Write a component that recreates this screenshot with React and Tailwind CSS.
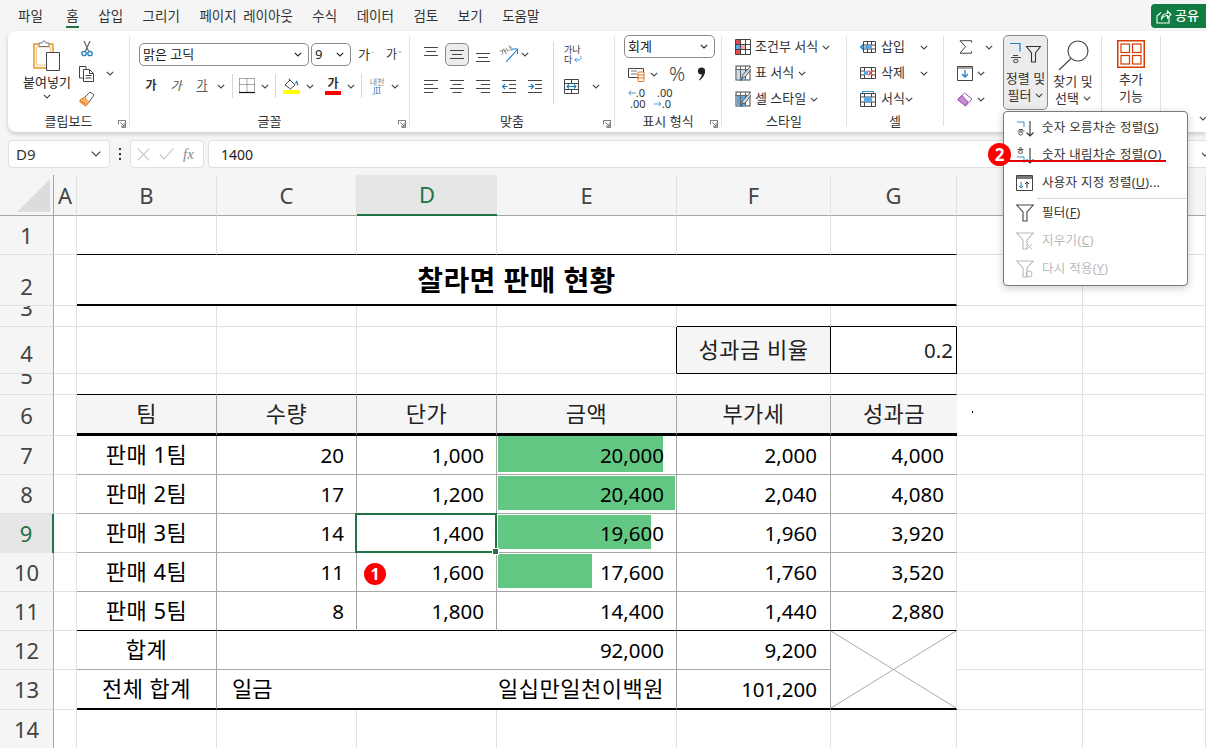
import React from "react";

const FONT = "font-['Noto_Sans','Noto_Sans_CJK_KR',sans-serif]";
const GRID = "border-r border-b border-[#e1e1e1]";
const TBL = "border-r border-b border-[#a6a6a6]";
const TBL_END = "border-r border-b border-r-[#a6a6a6] border-b-black";
const TBL_LAST = "border-r border-b-2 border-r-[#a6a6a6] border-b-black";

const Chev = ({ dark }) => (
  <svg width="8" height="5" viewBox="0 0 8 5" className="shrink-0">
    <path d="M.8.8 4 4 7.2.8" fill="none" stroke={dark ? "#222" : "#444"} strokeWidth="1.1" />
  </svg>
);

const ChevBox = ({ className }) => (
  <div className={`flex items-center justify-center ${className}`}>
    <Chev />
  </div>
);

const Launcher = () => (
  <svg width="8" height="8" viewBox="0 0 9 9">
    <path d="M.5 5V.5H8.500V8.500H4M2.500 2.500 7 7M7 3.500V7H3.500" fill="none" stroke="#555" strokeWidth=".9" />
  </svg>
);

const Group = ({ className, label, launcher, children }) => (
  <div className={`flex h-[90px] shrink-0 flex-col border-r border-[#e1e1e1] ${className}`}>
    <div className="h-[78px] shrink-0">{children}</div>
    <div className="grid h-[12px] grid-cols-[1fr_auto_1fr] grid-rows-[14px] items-center text-[13px] leading-[14px] text-[#333]">
      <span />
      <span className="whitespace-nowrap">{label}</span>
      <span className="flex justify-end pr-[3px] pt-[5px]">{launcher && <Launcher />}</span>
    </div>
  </div>
);

const Combo = ({ className, text }) => (
  <div className={`flex h-[23px] items-center justify-between rounded-[5px] border border-[#8a8a8a] pl-[3px] pr-[6px] text-[13px] text-[#222] ${className}`}>
    <span>{text}</span>
    <Chev dark />
  </div>
);

const Sep = ({ className }) => <div className={`w-px bg-[#d6d6d6] ${className}`} />;

const PasteIcon = () => (
  <svg width="30" height="32" viewBox="0 0 30 32">
    <path d="M2 5h19v24H2z" fill="#fdf3df" stroke="#e39a33" strokeWidth="1.500" />
    <path d="M4.500 8h14v18h-14z" fill="#fff" stroke="#f0c98a" />
    <path d="M7 6.500V4h3l2-2.500L14 4h3v3.500H7z" fill="#fff" stroke="#777" />
    <path d="M14.500 13.500h13v18h-13z" fill="#fff" stroke="#444" />
  </svg>
);
const ScissorsIcon = () => (
  <svg width="12" height="17" viewBox="0 0 12 17">
    <path d="M3 1l4.500 10M9 1 4.500 11" stroke="#666" strokeWidth="1.200" fill="none" />
    <circle cx="3" cy="13.500" r="2.200" fill="none" stroke="#1f7fc4" strokeWidth="1.300" />
    <circle cx="9" cy="13.500" r="2.200" fill="none" stroke="#1f7fc4" strokeWidth="1.300" />
  </svg>
);
const CopyIcon = () => (
  <svg width="16" height="16" viewBox="0 0 16 16" fill="none" stroke="#444">
    <path d="M5 12H.5V.5H7V3" />
    <path d="M4.500 3.500h6l4 4v8h-10z" fill="#fff" />
    <path d="M10.500 3.500v4h4M6.500 9.500h6M6.500 12h6" />
  </svg>
);
const BrushIcon = () => (
  <svg width="16" height="16" viewBox="0 0 16 16">
    <path d="M1 9l5-3 4 5-3 4-3-2-3-2z" fill="#f6b26b" stroke="#e2711d" />
    <path d="M6 6l5-5 4 3-5 7" fill="#fff" stroke="#555" />
    <path d="M3 10l3 3" stroke="#e2711d" />
  </svg>
);
const BorderIcon = () => (
  <svg width="16" height="16" viewBox="0 0 16 16" fill="none">
    <path d="M.5.500h15v13M.5.500v13M8 .5v13M.5 6.500h15" stroke="#555" strokeWidth="1" strokeDasharray="1 1" />
    <path d="M0 14.500h16" stroke="#111" strokeWidth="1.200" />
  </svg>
);
const FillIcon = () => (
  <svg width="17" height="16" viewBox="0 0 17 16">
    <path d="M2 7l5-5 5 5-4.500 4z" fill="#fff" stroke="#444" />
    <path d="M6 2l1-1.500M12.500 5.500l1-2 1 2v2" fill="none" stroke="#1f7fc4" strokeWidth="1.200" />
    <rect y="12" width="17" height="4" fill="#ffff00" />
  </svg>
);
const AlignLines = ({ kind }) => {
  const rows = {
    top: ["M0 .5h14", "M2 4.500h10", "M0 8.500h14"],
    mid: ["M0 .5h14", "M2 4.500h10", "M0 8.500h14"],
    left: ["M0 .5h14", "M0 4.500h9", "M0 8.500h14", "M0 12.500h9"],
    center: ["M0 .5h14", "M2.500 4.500h9", "M0 8.500h14", "M2.500 12.500h9"],
    right: ["M0 .5h14", "M5 4.500h9", "M0 8.500h14", "M5 12.500h9"],
  }[kind];
  return (
    <svg width="14" height="13" viewBox="0 0 14 13">
      {rows.map((d) => (
        <path key={d} d={d} stroke="#444" />
      ))}
    </svg>
  );
};
const IndentIcon = ({ dir }) => (
  <svg width="14" height="13" viewBox="0 0 14 13" fill="none">
    <path d="M0 .5h14M7 4.500h7M7 8.500h7M0 12.500h14" stroke="#444" />
    {dir === "out" ? (
      <path d="M5.500 6.500H.5M3 4 .5 6.500 3 9" stroke="#1f7fc4" strokeWidth="1.200" />
    ) : (
      <path d="M.5 6.500h5M3 4l2.500 2.500L3 9" stroke="#1f7fc4" strokeWidth="1.200" />
    )}
  </svg>
);
const MergeIcon = () => (
  <svg width="15" height="15" viewBox="0 0 15 15" fill="none">
    <path d="M.5.500h14v14H.5zM.5 4.500h14M.5 10.500h14M7.500.5v4M7.500 10.500v4" stroke="#444" />
    <path d="M3 7.500h9M5 5.500l-2 2 2 2M10 5.500l2 2-2 2" stroke="#1f7fc4" strokeWidth="1.100" />
  </svg>
);
const AccountIcon = () => (
  <svg width="17" height="15" viewBox="0 0 17 15" fill="none">
    <path d="M.5 1.500h15v9H.5z" fill="#fff" stroke="#444" />
    <path d="M3 4h6M3 7h6" stroke="#777" />
    <rect x="10" y="5" width="6" height="9.500" rx="1" fill="#fff" stroke="#e2711d" />
    <path d="M10 8h6M10 11h6" stroke="#e2711d" />
  </svg>
);
const Comma = () => (
  <svg width="9" height="14" viewBox="0 0 9 14">
    <circle cx="4.500" cy="4" r="3.600" fill="#222" />
    <path d="M8 4c0 4-2 7-5.500 9.500l-.5-.8C4 11 5 9 5 6z" fill="#222" />
  </svg>
);
const TableIcon = ({ children }) => (
  <svg width="16" height="16" viewBox="0 0 16 16" className="shrink-0" fill="none">
    {children}
    <path d="M.5.500h15v15H.5zM5.500.5v15M10.500.5v15M.5 5.500h15M.5 10.500h15" stroke="#444" />
  </svg>
);
const CondIcon = () => (
  <TableIcon>
    <rect x="1" y="1" width="5" height="5" fill="#e8474c" />
    <rect x="1" y="6" width="5" height="4" fill="#5aa7e6" />
    <rect x="1" y="11" width="5" height="4" fill="#e8474c" />
    <rect x="6" y="6" width="5" height="4" fill="#f4a9ac" />
  </TableIcon>
);
const StyleIcon = ({ fill }) => (
  <svg width="16" height="16" viewBox="0 0 16 16" className="shrink-0" fill="none">
    <rect x="1" y="1" width="14" height="14" fill="#fff" stroke="#444" />
    <rect x="2" y="4" width="9" height="10" fill={fill} />
    <path d="M.5 4.500h15M5.500 1v14M10.500 1v14" stroke="#666" />
    <path d="M15.500 1.500 8 9.500l-1.500 4 4-2 6-8" fill="#ddd" stroke="#555" />
    <path d="M6.500 13.500 5 15.500l3-1" fill="#1f7fc4" stroke="#1f7fc4" />
  </svg>
);
const InsertIcon = () => (
  <svg width="16" height="16" viewBox="0 0 16 16" fill="none">
    <path d="M3.500 2.500h12v11h-12zM3.500 6h12M3.500 10h12M7.500 2.500v11M11.500 2.500v11" stroke="#444" />
    <rect x="6" y="6" width="6" height="4" fill="#5aa7e6" />
    <path d="M7 8H.5M3 5.500 .5 8 3 10.500" stroke="#1f7fc4" strokeWidth="1.200" />
  </svg>
);
const DeleteIcon = () => (
  <svg width="16" height="16" viewBox="0 0 16 16" fill="none">
    <path d="M.5 2.500h15v11H.5zM.5 6h4M.5 10h4M11.500 6h4M11.500 10h4M4.500 2.500v11M11.500 2.500v11" stroke="#444" />
    <rect x="4" y="6" width="4" height="4" fill="#5aa7e6" />
    <path d="M8.500 5.500l4 5M12.500 5.500l-4 5" stroke="#e8474c" strokeWidth="1.300" />
  </svg>
);
const FormatIcon = () => (
  <svg width="16" height="16" viewBox="0 0 16 16" fill="none">
    <path d="M.5 2.500h15v13H.5zM.5 6h15M.5 11h15M4.500 2.500v13M11.500 2.500v13" stroke="#444" />
    <rect x="4" y="6" width="8" height="5" fill="#5aa7e6" />
    <path d="M2.500.5h11M2.500 0v2M13.500 0v2" stroke="#1f9bd8" />
  </svg>
);
const SigmaIcon = () => (
  <svg width="13" height="14" viewBox="0 0 13 14">
    <path d="M12.500 2.500V.7H1l5.500 6-5.500 6.500h11.500v-2" fill="none" stroke="#444" />
  </svg>
);
const FillDownIcon = () => (
  <svg width="16" height="15" viewBox="0 0 16 15" fill="none">
    <path d="M.5.500h15v14H.5z" stroke="#444" />
    <path d="M.5 2h15" stroke="#444" />
    <path d="M8 4v7M5 8l3 3 3-3" stroke="#1f7fc4" strokeWidth="1.300" />
  </svg>
);
const EraserIcon = () => (
  <svg width="16" height="15" viewBox="0 0 16 15">
    <path d="M.8 7.500 7.500 1l7.500 6-6.500 7z" fill="#fff" stroke="#9b4fb0" />
    <path d="M.8 7.500 5 3.500l6 6.500L8.500 14z" fill="#c78bd8" stroke="#9b4fb0" />
  </svg>
);
const SortGlyphs = ({ desc }) => (
  <svg width="19" height="17" viewBox="0 0 19 17" fill="none">
    <path d={desc ? "M3 1h3M1.500 2.500h6M2.500 5a2 1.500 0 1 0 4 0a2 1.500 0 1 0-4 0" : "M1 2h7v5"} stroke={desc ? "#444" : "#1f7fc4"} strokeWidth=".9" />
    <path d={desc ? "M1 10h7v6" : "M3 9.500h4M1.500 11h7M2.700 13.500a2 1.500 0 1 0 4 0a2 1.500 0 1 0-4 0"} stroke={desc ? "#1f7fc4" : "#444"} strokeWidth=".9" />
    <path d="M14 1v15M10.500 12.500 14 16l3.500-3.500" stroke="#333" strokeWidth="1.100" />
  </svg>
);
const CustomSortIcon = () => (
  <svg width="18" height="17" viewBox="0 0 18 17" fill="none">
    <path d="M.5.500h16v15H.5z" stroke="#444" />
    <rect x="1" y="1" width="15" height="3" fill="#777" />
    <path d="M5 7v6M3 11l2 2 2-2" stroke="#1f7fc4" />
    <path d="M11 13V7M9 9l2-2 2 2" stroke="#333" />
  </svg>
);
const Funnel = ({ color = "#444", children }) => (
  <svg width="18" height="18" viewBox="0 0 18 18" fill="none">
    <path d="M.7 1h16.600l-6.300 7v9H7V8z" stroke={color} strokeWidth="1.100" fill="#fff" />
    {children}
  </svg>
);
const RibbonSortIcon = () => (
  <svg width="31" height="22" viewBox="0 0 31 22" fill="none">
    <path d="M0 1.500h10v8" stroke="#1f7fc4" strokeWidth="1.200" />
    <path d="M3 13.500h5M1 15.500h10M3.500 19a2.300 1.700 0 1 0 4.600 0a2.300 1.700 0 1 0-4.600 0" stroke="#444" />
    <path d="M16.500 4.500h14l-5 6.500v9h-4v-9z" stroke="#333" strokeWidth="1.100" />
  </svg>
);
const SearchIcon = () => (
  <svg width="31" height="31" viewBox="0 0 31 31" fill="none">
    <circle cx="20" cy="11" r="10" stroke="#444" strokeWidth="1.100" />
    <path d="M13 18.500 1 30" stroke="#444" strokeWidth="1.100" />
  </svg>
);
const AddinIcon = () => (
  <svg width="28" height="28" viewBox="0 0 28 28" fill="none" stroke="#d83b01">
    <rect x=".75" y=".75" width="26.500" height="26.500" strokeWidth="1.500" />
    <rect x="4" y="4" width="8.500" height="8.500" strokeWidth="1.200" />
    <rect x="15.500" y="4" width="8.500" height="8.500" strokeWidth="1.200" />
    <rect x="4" y="15.500" width="8.500" height="8.500" strokeWidth="1.200" />
    <rect x="15.500" y="15.500" width="8.500" height="8.500" strokeWidth="1.200" />
  </svg>
);
const ShareIcon = () => (
  <svg width="16" height="15" viewBox="0 0 16 15" fill="none" stroke="#fff" strokeWidth="1.100">
    <path d="M5 3.500 1 7v7h12V8" />
    <path d="M5.500 10c0-3.500 2.500-5.500 6-5.500V2l3.500 3.500L11.500 9V6.500c-2.500 0-4.500 1-6 3.500z" />
  </svg>
);

const tabs = ["파일", "홈", "삽입", "그리기", "페이지 레이아웃", "수식", "데이터", "검토", "보기", "도움말"];

const TabBar = () => (
  <div className="flex h-[31px] items-start justify-between">
    <div className="ml-[18px] flex gap-[19.5px] pt-[7px] text-[13.5px] leading-[18px] text-[#333] [word-spacing:3px]">
      {tabs.map((t) => (
        <div key={t} className={t === "파일" ? "relative pr-[4px]" : "relative"}>
          {t}
          {t === "홈" && <div className="absolute left-0 right-0 top-[19px] h-[2px] bg-[#217346]" />}
        </div>
      ))}
    </div>
    <div className="mt-[4px] flex h-[24px] w-[55px] items-center gap-[3px] rounded-l-[4px] bg-[#107c41] pl-[5px] text-[13px] font-medium text-white">
      <ShareIcon />
      <span className="whitespace-nowrap">공유</span>
    </div>
  </div>
);

const Clipboard = () => (
  <Group className="w-[122px]" label="클립보드" launcher>
    <div className="flex h-full">
      <div className="ml-[8px] flex w-[62px] flex-col items-center pt-[3px]">
        <PasteIcon />
        <div className="mt-[3px] whitespace-nowrap text-[13px] leading-[16px] text-[#222]">붙여넣기</div>
        <div className="mt-[4px]"><Chev /></div>
      </div>
      <div className="ml-[1px] flex w-[16px] flex-col items-center">
        <div className="flex h-[25px] items-center"><ScissorsIcon /></div>
        <div className="flex h-[25px] items-center"><CopyIcon /></div>
        <div className="flex h-[25px] items-center"><BrushIcon /></div>
      </div>
      <ChevBox className="ml-[10px] mt-[25px] h-[25px] w-[10px]" />
    </div>
  </Group>
);

const Caret = ({ down }) => (
  <svg width="6" height="4" viewBox="0 0 6 4" className="mb-[6px] ml-px" fill="none">
    <path d={down ? "M.5.500 3 3 5.500.5" : "M.5 3.500 3 1l2.500 2.500"} stroke="#1f7fc4" />
  </svg>
);

const FontGroup = () => (
  <Group className="w-[280px]" label="글꼴" launcher>
    <div className="flex items-center pl-[9px] pt-[7px]">
      <Combo className="w-[170px]" text="맑은 고딕" />
      <Combo className="ml-[2px] w-[40px]" text="9" />
      <div className="ml-[7px] flex w-[16px] items-center text-[13px] text-[#333]">가<Caret /></div>
      <div className="ml-[12px] flex w-[16px] items-center text-[12px] text-[#333]">가<Caret down /></div>
    </div>
    <div className="mt-[9px] flex h-[22px] items-center pl-[9px] text-[12px] text-[#333]">
      <div className="w-[24px] text-center font-bold">가</div>
      <div className="w-[26px] text-center italic text-[#555]">가</div>
      <div className="w-[26px] text-center text-[#555] underline">가</div>
      <ChevBox className="w-[12px]" />
      <Sep className="ml-[5px] h-[24px]" />
      <div className="ml-[6px]"><BorderIcon /></div>
      <ChevBox className="w-[20px]" />
      <Sep className="h-[24px]" />
      <div className="ml-[7px]"><FillIcon /></div>
      <ChevBox className="w-[20px]" />
      <div className="ml-[5px] flex w-[16px] flex-col items-center font-bold leading-[13px]">
        가
        <div className="mt-px h-[4px] w-[16px] bg-[#ff0000]" />
      </div>
      <ChevBox className="w-[20px]" />
      <Sep className="h-[24px]" />
      <div className="ml-[6px] w-[18px] text-center text-[8px] leading-[9px] text-[#888]">
        내천
        <div className="text-[#1f7fc4]">JII</div>
      </div>
      <ChevBox className="w-[18px]" />
    </div>
  </Group>
);

const AlignGroup = () => (
  <Group className="w-[205px]" label="맞춤" launcher>
    <div className="flex h-full">
      <div className="w-[143px] pl-[14px] pt-[7px]">
        <div className="flex h-[23px] items-center">
          <div className="mb-[2px] flex h-[13px]"><AlignLines kind="top" /></div>
          <div className="ml-[7px] flex h-[23px] w-[24px] items-center justify-center rounded-[5px] border border-[#8a8a8a] bg-[#ececec] pt-[4px]">
            <AlignLines kind="mid" />
          </div>
          <div className="ml-[7px] mt-[10px] flex h-[13px]"><AlignLines kind="top" /></div>
          <div className="relative ml-[11px] h-[18px] w-[17px]">
            <span className="absolute -left-[1px] top-[1px] -rotate-[30deg] whitespace-nowrap text-[7px] leading-[8px] text-[#444]">가나</span>
            <svg width="17" height="18" viewBox="0 0 17 18" fill="none">
              <path d="M5 16 16 4M11 3h5.500v5" stroke="#1f7fc4" strokeWidth="1.100" />
            </svg>
          </div>
          <ChevBox className="ml-[2px] w-[10px]" />
        </div>
        <div className="mt-[9px] flex h-[22px] items-center gap-[12px]">
          <AlignLines kind="left" />
          <AlignLines kind="center" />
          <AlignLines kind="right" />
          <IndentIcon dir="out" />
          <IndentIcon dir="in" />
        </div>
      </div>
      <Sep className="mt-[6px] h-[62px]" />
      <div className="ml-[10px] pt-[9px]">
        <div className="relative h-[20px] w-[18px] text-[9px] leading-[10px] text-[#333]">
          <div className="whitespace-nowrap">가나</div>
          <div>다</div>
          <svg width="8" height="9" viewBox="0 0 10 9" className="absolute left-[10px] top-[10px]" fill="none">
            <path d="M8 0c2 3 0 5-2 5H1M3.500 2.500 1 5l2.500 2.500" stroke="#1f7fc4" />
          </svg>
        </div>
        <div className="mt-[14px] flex items-center">
          <MergeIcon />
          <ChevBox className="ml-[8px] w-[18px]" />
        </div>
      </div>
    </div>
  </Group>
);

const NumberGroup = () => (
  <Group className="w-[107px]" label="표시 형식" launcher>
    <div className="-mt-px pl-[9px]">
      <Combo className="w-[91px]" text="회계" />
      <div className="mt-[6px] flex h-[20px] items-center pl-[4px]">
        <AccountIcon />
        <ChevBox className="ml-[4px] w-[10px]" />
        <div className="ml-[10px] text-[20px] font-light leading-[20px] text-[#444]">%</div>
        <div className="ml-[12px]"><Comma /></div>
      </div>
      <div className="mt-[3px] flex items-center pl-[4px] text-[11px] leading-[11px] text-[#333]">
        <div className="w-[17px]">
          <div className="flex items-center">
            <svg width="10" height="8" viewBox="0 0 10 8" fill="none"><path d="M10 4H1M4 1 1 4l3 3" stroke="#1f7fc4" /></svg>
            <span>.0</span>
          </div>
          <div className="pl-[2px]">.00</div>
        </div>
        <div className="ml-[9px] w-[17px]">
          <div className="pl-[3px]">.00</div>
          <div className="flex items-center">
            <svg width="10" height="8" viewBox="0 0 10 8" fill="none"><path d="M0 4h9M6 1l3 3-3 3" stroke="#1f7fc4" /></svg>
            <span>.0</span>
          </div>
        </div>
      </div>
    </div>
  </Group>
);

const StyleRow = ({ icon, text }) => (
  <div className="flex h-[26px] items-center gap-[4px] whitespace-nowrap text-[13px] text-[#333]">
    {icon}
    {text}
    <Chev />
  </div>
);

const StylesGroup = () => (
  <Group className="w-[125px]" label="스타일">
    <div className="-mt-[2px] pl-[13px]">
      <StyleRow icon={<CondIcon />} text="조건부 서식" />
      <StyleRow icon={<StyleIcon fill="#bcdcf5" />} text="표 서식" />
      <StyleRow icon={<StyleIcon fill="#5aa7e6" />} text="셀 스타일" />
    </div>
  </Group>
);

const CellsRow = ({ icon, text, wide }) => (
  <div className="flex h-[26px] items-center text-[13px] text-[#333]">
    {icon}
    <span className="ml-[5px]">{text}</span>
    <ChevBox className={wide ? "ml-[14px] w-[10px]" : "ml-[-1px] w-[10px]"} />
  </div>
);

const CellsGroup = () => (
  <Group className="w-[97px]" label="셀">
    <div className="-mt-[2px] pl-[13px]">
      <CellsRow icon={<InsertIcon />} text="삽입" wide />
      <CellsRow icon={<DeleteIcon />} text="삭제" wide />
      <CellsRow icon={<FormatIcon />} text="서식" />
    </div>
  </Group>
);

const EditGroup = () => (
  <Group className="w-[158px]" label="">
    <div className="flex">
      <div className="-mt-[2px] w-[59px] pl-[13px]">
        <div className="flex h-[26px] items-center pl-[2px]"><SigmaIcon /><ChevBox className="ml-[12px] w-[10px]" /></div>
        <div className="flex h-[26px] items-center"><FillDownIcon /><ChevBox className="ml-[3px] w-[10px]" /></div>
        <div className="flex h-[26px] items-center"><EraserIcon /><ChevBox className="ml-[3px] w-[10px]" /></div>
      </div>
      <div className="-mt-px flex h-[75px] w-[45px] flex-col items-center rounded-[5px] border border-[#8a8a8a] bg-[#ececec] pt-[6px] text-[13px] leading-[17px] text-[#333]">
        <RibbonSortIcon />
        <div className="mt-[6px] whitespace-nowrap">정렬 및</div>
        <div className="flex items-center gap-[4px]">필터 <Chev /></div>
      </div>
      <div className="flex w-[50px] flex-col items-center pt-[4px] text-[13px] leading-[17px] text-[#333]">
        <SearchIcon />
        <div className="mt-[2px] whitespace-nowrap">찾기 및</div>
        <div className="flex items-center gap-[4px]">선택 <Chev /></div>
      </div>
    </div>
  </Group>
);

const AddinGroup = () => (
  <Group className="w-[59px]" label="">
    <div className="flex flex-col items-center pt-[4px] text-[13px] leading-[17px] text-[#333]">
      <AddinIcon />
      <div className="mt-[3px]">추가</div>
      <div>기능</div>
    </div>
  </Group>
);

const Ribbon = () => (
  <div className="ml-[8px] flex h-[101px] rounded-l-[8px] bg-white py-[5px] shadow-[0_2px_4px_rgba(0,0,0,0.18)]">
    <Clipboard />
    <FontGroup />
    <AlignGroup />
    <NumberGroup />
    <StylesGroup />
    <CellsGroup />
    <EditGroup />
    <AddinGroup />
    <div className="-mr-[1px] flex flex-1 items-end justify-end pb-[6px]"><Chev /></div>
  </div>
);

const FormulaBar = () => (
  <div className="mt-[8px] flex h-[28px]">
    <div className="ml-[8px] flex w-[102px] items-center justify-between rounded-[4px] border border-[#e0e0e0] bg-white pl-[7px] pr-[8px] text-[15px] text-[#333]">
      D9
      <svg width="10" height="6" viewBox="0 0 10 6"><path d="M.7.7 5 5 9.300.7" fill="none" stroke="#444" strokeWidth="1.200" /></svg>
    </div>
    <div className="flex w-[20px] flex-col items-center justify-center gap-[3px]">
      <div className="h-[2px] w-[2px] bg-[#333]" />
      <div className="h-[2px] w-[2px] bg-[#333]" />
      <div className="h-[2px] w-[2px] bg-[#333]" />
    </div>
    <div className="flex w-[74px] items-center gap-[9px] rounded-[4px] border border-[#e0e0e0] bg-white pl-[6px]">
      <svg width="13" height="13" viewBox="0 0 13 13"><path d="M.7.7l11.600 11.600M12.300.7.7 12.300" stroke="#c4c4c4" strokeWidth="1.100" /></svg>
      <svg width="15" height="12" viewBox="0 0 15 12" fill="none"><path d="M.7 6.500 5 11 14.300.7" stroke="#c4c4c4" strokeWidth="1.100" /></svg>
      <span className="font-['Liberation_Serif',serif] text-[15px] italic text-[#8a8a8a]">fx</span>
    </div>
    <div className="ml-[4px] flex flex-1 items-center justify-between rounded-l-[4px] border border-r-0 border-[#e0e0e0] bg-white pl-[12px] text-[14px] text-[#222]">
      1400
      <div className="-mr-[3px]"><Chev /></div>
    </div>
  </div>
);

const columns = ["A", "B", "C", "D", "E", "F", "G", "", ""];

const HeaderRow = () => (
  <>
    <div className="flex items-end justify-end border-r border-b border-[#a6a6a6] bg-[#f5f5f5] pb-[3px] pr-[3px]">
      <svg width="33" height="33" viewBox="0 0 33 33"><path d="M33 0v33H0z" fill="#dcdcdc" /></svg>
    </div>
    {columns.map((c, i) =>
      c === "D" ? (
        <div key={i} className="flex items-center justify-center border-b-2 border-[#217346] bg-[#e6e6e6] text-[22px] text-[#217346]">{c}</div>
      ) : (
        <div key={i} className="flex items-center justify-center border-r border-b border-r-[#e1e1e1] border-b-[#a6a6a6] bg-[#f5f5f5] text-[22px] text-[#444]">{c}</div>
      ),
    )}
  </>
);

const RowHead = ({ n, active, clip, pad = "" }) =>
  active ? (
    <div className="flex items-center justify-center border-r-2 border-[#217346] bg-[#e6e6e6] text-[22px] text-[#217346]">{n}</div>
  ) : (
    <div className={`flex justify-center overflow-hidden border-r border-b border-r-[#a6a6a6] border-b-[#e1e1e1] bg-[#f5f5f5] text-[22px] text-[#444] ${clip ? "items-start" : "items-center"} ${pad}`}>
      <span className={clip ? "-mt-[12px] leading-[27px]" : ""}>{n}</span>
    </div>
  );

const Blank = ({ className = GRID, children }) => <div className={className}>{children}</div>;

const Num = ({ children, className = TBL, pr = "pr-[12px]" }) => (
  <div className={`flex items-center justify-end text-[20.5px] ${pr} ${className}`}>{children}</div>
);

const Center = ({ children, className = TBL }) => (
  <div className={`flex items-center justify-center pb-[2px] text-[22px] tracking-[0.5px] ${className}`}>{children}</div>
);

const teams = [
  { n: 7, team: "판매 1팀", qty: 20, price: "1,000", amount: "20,000", bar: "w-[165px]", vat: "2,000", bonus: "4,000", y: "top-0 bottom-[2px]" },
  { n: 8, team: "판매 2팀", qty: 17, price: "1,200", amount: "20,400", bar: "w-[177px]", vat: "2,040", bonus: "4,080", y: "top-[1px] bottom-[3px]" },
  { n: 9, team: "판매 3팀", qty: 14, price: "1,400", amount: "19,600", bar: "w-[153px]", vat: "1,960", bonus: "3,920", y: "top-[1px] bottom-[3px]" },
  { n: 10, team: "판매 4팀", qty: 11, price: "1,600", amount: "17,600", bar: "w-[94px]", vat: "1,760", bonus: "3,520", y: "top-[1px] bottom-[3px]" },
  { n: 11, team: "판매 5팀", qty: 8, price: "1,800", amount: "14,400", vat: "1,440", bonus: "2,880" },
];

const Sheet = () => (
  <div className="mt-[7px] grid grid-cols-[54px_23px_140px_140px_140px_180px_154px_126px_126px_123px] grid-rows-[41px_39px_51px_21px_47px_21px_41px_39px_39px_39px_39px_39px_39px_40px_39px] bg-white text-[20px] text-black">
    <HeaderRow />

    <RowHead n={1} />
    <Blank />
    {["b", "c", "d", "e", "f", "g"].map((k) => (
      <Blank key={k} className="border-r border-b border-r-[#e1e1e1] border-b-black" />
    ))}
    <Blank />
    <Blank />

    <RowHead n={2} pad="pt-[12px]" />
    <Blank />
    <div className="col-span-6 flex items-center justify-center border-r border-b-2 border-r-[#e1e1e1] border-b-black text-[28px] font-bold tracking-[0.4px] text-black">
      찰라면 판매 현황
    </div>
    <Blank />
    <Blank />

    <RowHead n={3} clip />
    <Blank />
    <Blank />
    <Blank />
    <Blank />
    <Blank />
    <Blank className="border-r border-b border-r-[#e1e1e1] border-b-black" />
    <Blank className="border-r border-b border-r-[#e1e1e1] border-b-black" />
    <Blank />
    <Blank />

    <RowHead n={4} pad="pt-[6px]" />
    <Blank />
    <Blank />
    <Blank />
    <Blank />
    <Blank className="border-r border-b border-r-black border-b-[#e1e1e1]" />
    <Center className="border-r border-b border-black bg-[#f5f5f5] text-[#222]">성과금 비율</Center>
    <Num className="border-r border-b border-black bg-white text-[#222]" pr="pr-[3px]">0.2</Num>
    <Blank />
    <Blank />

    <RowHead n={5} clip />
    <Blank />
    {["b", "c", "d", "e", "f", "g"].map((k) => (
      <Blank key={k} className="border-r border-b border-r-[#e1e1e1] border-b-black" />
    ))}
    <Blank />
    <Blank />

    <RowHead n={6} />
    <Blank />
    {["팀", "수량", "단가", "금액", "부가세"].map((t) => (
      <Center key={t} className="border-r border-b-[3px] border-r-[#a6a6a6] border-b-black bg-[#f5f5f5] text-[#222]">{t}</Center>
    ))}
    <Center className="border-b-[3px] border-b-black bg-[#f5f5f5] text-[#222]">성과금</Center>
    <div className={`flex items-center ${GRID}`}>
      <div className="mb-[6px] ml-[15px] h-[2px] w-px bg-black" />
    </div>
    <Blank />

    {teams.map((r) => {
      const line = r.n === 11 ? TBL_END : TBL;
      return (
        <React.Fragment key={r.n}>
          <RowHead n={r.n} active={r.n === 9} />
          <Blank />
          <Center className={line}>{r.team}</Center>
          <Num className={line}>{r.qty}</Num>
          <div className={`relative flex items-center justify-end pr-[12px] text-[20.5px] ${line}`}>
            {r.price}
            {r.n === 9 && (
              <div className="absolute -left-[2px] -top-[1px] bottom-[-1px] right-[-1px] z-10 border-2 border-[#217346]">
                <div className="absolute -bottom-[4px] -right-[4px] h-[7px] w-[7px] border border-white bg-[#217346]" />
              </div>
            )}
            {r.n === 10 && (
              <div className="absolute left-[7px] top-[10px] flex h-[22px] w-[22px] items-center justify-center rounded-full bg-[#ff0000] text-[16px] font-bold leading-none text-white">1</div>
            )}
          </div>
          <div className={`relative flex items-center justify-end pr-[12px] text-[20.5px] ${line}`}>
            {r.bar && <div className={`absolute left-[1px] bg-[#63c784] ${r.bar} ${r.y}`} />}
            <span className="relative">{r.amount}</span>
          </div>
          <Num className={line} pr="pr-[13px]">{r.vat}</Num>
          <Num className={r.n === 11 ? "border-r border-b border-r-[#e1e1e1] border-b-black" : "border-r border-b border-r-[#e1e1e1] border-b-[#a6a6a6]"}>{r.bonus}</Num>
          <Blank />
          <Blank />
        </React.Fragment>
      );
    })}

    <RowHead n={12} />
    <Blank />
    <Center>합계</Center>
    <Num className={`col-span-3 ${TBL}`}>92,000</Num>
    <Num pr="pr-[13px]">9,200</Num>
    <div className="relative row-span-2 border-r border-b-2 border-r-[#e1e1e1] border-b-black">
      <svg className="absolute inset-0 h-full w-full" viewBox="0 0 126 78" preserveAspectRatio="none">
        <path d="M0 0 126 78M126 0 0 78" stroke="#a0a0a0" strokeWidth=".9" />
      </svg>
    </div>
    <Blank />
    <Blank />

    <RowHead n={13} />
    <Blank />
    <Center className={TBL_LAST}>전체 합계</Center>
    <div className={`col-span-3 flex items-center justify-between pb-[2px] pl-[15px] pr-[12px] text-[22px] ${TBL_LAST}`}>
      <span>일금</span>
      <span className="tracking-[0.5px]">일십만일천이백원</span>
    </div>
    <Num className={TBL_LAST} pr="pr-[13px]">101,200</Num>
    <Blank />
    <Blank />

    <RowHead n={14} />
    <Blank />
    {["b", "c", "d", "e", "f", "g", "h", "i"].map((k) => (
      <Blank key={k} />
    ))}
  </div>
);

const MenuItem = ({ icon, children, disabled, className = "h-[28px]" }) => (
  <div className={`flex items-center pl-[12px] text-[12.5px] ${disabled ? "text-[#b8b8b8]" : "text-[#333]"} ${className}`}>
    <div className="flex w-[26px] shrink-0">{icon}</div>
    <span className="whitespace-nowrap tracking-[0.3px]">{children}</span>
  </div>
);

const SortMenu = () => (
  <div className="absolute left-[1003px] top-[111px] h-[175px] w-[185px] rounded-[4px] border border-[#7a7a7a] bg-white pt-[2px] shadow-[0_2px_8px_rgba(0,0,0,0.2)]">
    <MenuItem icon={<SortGlyphs />}>숫자 오름차순 정렬(<u>S</u>)</MenuItem>
    <MenuItem icon={<SortGlyphs desc />} className="h-[27px]">숫자 내림차순 정렬(<u>O</u>)</MenuItem>
    <MenuItem icon={<CustomSortIcon />}>사용자 지정 정렬(<u>U</u>)...</MenuItem>
    <div className="ml-[33px] mr-px mt-[1px] h-px bg-[#d6d6d6]" />
    <MenuItem icon={<Funnel />}>필터(<u>F</u>)</MenuItem>
    <MenuItem disabled icon={<Funnel color="#b8b8b8"><path d="M11 12l5 5M16 12l-5 5" stroke="#b8b8b8" /></Funnel>}>지우기(<u>C</u>)</MenuItem>
    <MenuItem disabled icon={<Funnel color="#b8b8b8"><circle cx="13" cy="14" r="3" stroke="#b8b8b8" /></Funnel>}>다시 적용(<u>Y</u>)</MenuItem>
  </div>
);

export default function App() {
  return (
    <div className={`relative h-[748px] w-[1206px] overflow-hidden bg-[#f5f5f5] text-[#222] ${FONT}`}>
      <TabBar />
      <Ribbon />
      <FormulaBar />
      <Sheet />
      <SortMenu />
      <div className="absolute left-[1005px] top-[160px] h-[2px] w-[161px] bg-[#e00000]" />
      <div className="absolute left-[988px] top-[143px] flex h-[23px] w-[23px] items-center justify-center rounded-full bg-[#ff0000] text-[17px] font-bold leading-none text-white">2</div>
    </div>
  );
}
